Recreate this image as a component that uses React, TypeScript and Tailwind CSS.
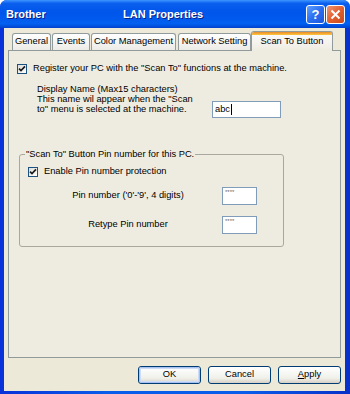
import React from 'react';

const font = "font-['Liberation_Sans',Arial,sans-serif]";

function Check() {
  return (
    <span className="flex h-[10px] w-[10px] shrink-0 items-center justify-center border border-[#1C5180] bg-[linear-gradient(135deg,#DCDCD7,#FFFFFF)]">
      <svg width="8" height="8" viewBox="0 0 8 8">
        <path d="M1 3.6 L3 5.6 L7 1.4" fill="none" stroke="#1B1B1B" strokeWidth="1.7" />
      </svg>
    </span>
  );
}

function Tab({ label, w, selected }: { label: string; w: string; selected?: boolean }) {
  if (selected) {
    return (
      <div
        className={`relative z-10 -mb-px flex h-[20px] ${w} flex-col overflow-hidden rounded-t-[3px] border border-b-0 border-[#919B9C] bg-[linear-gradient(180deg,#FCFCFE,#EEECE0)]`}
      >
        <div className="h-[3px] shrink-0 bg-[linear-gradient(180deg,#E68B2C,#FFC73C)]" />
        <div className="flex flex-1 items-center justify-center pb-[2px] text-[9.3px] text-black">{label}</div>
      </div>
    );
  }
  return (
    <div
      className={`flex h-[17px] ${w} items-center justify-center rounded-t-[3px] border border-b-0 border-[#919B9C] bg-[linear-gradient(180deg,#FFFFFF,#ECEBE6)] text-[9.3px] text-black`}
    >
      {label}
    </div>
  );
}

function Button({ children, focus }: { children: React.ReactNode; focus?: boolean }) {
  return (
    <div className="h-[18px] w-[63px] rounded-[3px] border border-[#003C74] bg-[linear-gradient(180deg,#FFFFFF,#F0F0EA_70%,#D6D0C5)]">
      <div
        className={`flex h-full w-full items-center justify-center rounded-[2px] text-[9.3px] text-black ${
          focus ? 'border border-[#A8C1F0] shadow-[inset_0_0_0_1px_#CEDCF6]' : ''
        }`}
      >
        {children}
      </div>
    </div>
  );
}

export default function App() {
  return (
    <div className={`${font} flex h-[394px] w-[350px] flex-col overflow-hidden rounded-t-[7px] bg-[linear-gradient(90deg,#0831D9,#0A5CEA_30%,#0A5CEA_70%,#0831C9)]`}>
      {/* Title bar */}
      <div className="flex h-[28px] shrink-0 items-center bg-[linear-gradient(180deg,#3D95FF_0%,#0A5FEE_12%,#0055EA_45%,#0260F0_85%,#0042CC_100%)] pl-[6px] pr-[5px]">
        <span className="w-[117px] text-[11px] font-bold text-white [text-shadow:1px_1px_0_#0A1E8A]">Brother</span>
        <span className="text-[11px] font-bold text-white [text-shadow:1px_1px_0_#0A1E8A]">LAN Properties</span>
        <div className="flex-1" />
        <div className="flex h-[19px] w-[19px] items-center justify-center rounded-[3px] border border-white bg-[linear-gradient(135deg,#5FA0FF,#2A6EF2_50%,#1E56DA)] text-[13px] font-bold leading-none text-white">
          ?
        </div>
        <div className="ml-px flex h-[19px] w-[19px] items-center justify-center rounded-[3px] border border-white bg-[linear-gradient(135deg,#F09676,#E1602F_50%,#C94A1D)]">
          <svg width="11" height="11" viewBox="0 0 11 11">
            <path d="M1.5 1.5 L9.5 9.5 M9.5 1.5 L1.5 9.5" stroke="white" strokeWidth="2" />
          </svg>
        </div>
      </div>

      {/* Dialog body */}
      <div className="ml-[4px] mr-[5px] flex h-[363px] flex-col bg-[#ECE9D8] px-[4px] pb-[7px] pt-[3px]">
        {/* Tabs */}
        <div className="flex h-[19px] items-end pl-[4px]">
          <Tab label="General" w="w-[39px]" />
          <div className="w-px" />
          <Tab label="Events" w="w-[38px]" />
          <div className="w-px" />
          <Tab label="Color Management" w="w-[85px]" />
          <div className="w-[2px]" />
          <Tab label="Network Setting" w="w-[73px]" />
          <Tab label="Scan To Button" w="w-[82px]" selected />
        </div>

        {/* Panel */}
        <div className="h-[308px] border border-[#919B9C] bg-[#EEECE0] pl-[8px] pt-[12px] text-[9.3px] text-black">
          <div className="flex h-[12px] items-center gap-[6px]">
            <Check />
            <span>Register your PC with the "Scan To" functions at the machine.</span>
          </div>

          <div className="ml-[20px] mt-[9px] flex">
            <div className="w-[175px] leading-[10px]">
              <div>Display Name (Max15 characters)</div>
              <div>This name wil appear when the "Scan</div>
              <div>to" menu is selected at the machine.</div>
            </div>
            <div className="mt-[17px] flex h-[17px] w-[69px] items-center border border-[#7F9DB9] bg-white pl-[2px]">
              abc<span className="ml-px h-[11px] w-px bg-black" />
            </div>
          </div>

          <fieldset className="ml-[2px] mt-[31px] w-[265px] rounded-[3px] border border-[#A9A89E] pb-[12px]">
            <legend className="ml-[5px] px-px leading-[11px]">"Scan To" Button Pin number for this PC.</legend>
            <div className="ml-[8px] mt-[6px] flex h-[12px] items-center gap-[6px]">
              <Check />
              <span>Enable Pin number protection</span>
            </div>
            <div className="mt-[9px] flex items-center">
              <div className="ml-[20px] w-[176px] text-center">Pin number ('0'-'9', 4 digits)</div>
              <div className="ml-[6px] h-[18px] w-[35px] border border-[#7F9DB9] bg-white pl-[2px] text-[6px] leading-[9px] text-[#6A6A6A]">
                ****
              </div>
            </div>
            <div className="mt-[11px] flex items-center">
              <div className="ml-[20px] w-[176px] text-center">Retype Pin number</div>
              <div className="ml-[6px] h-[18px] w-[35px] border border-[#7F9DB9] bg-white pl-[2px] text-[6px] leading-[9px] text-[#6A6A6A]">
                ****
              </div>
            </div>
          </fieldset>
        </div>

        {/* Buttons */}
        <div className="mt-[8px] flex justify-end gap-[7px]">
          <Button focus>OK</Button>
          <Button>Cancel</Button>
          <Button>
            <span>
              <span className="underline">A</span>pply
            </span>
          </Button>
        </div>
      </div>
    </div>
  );
}
